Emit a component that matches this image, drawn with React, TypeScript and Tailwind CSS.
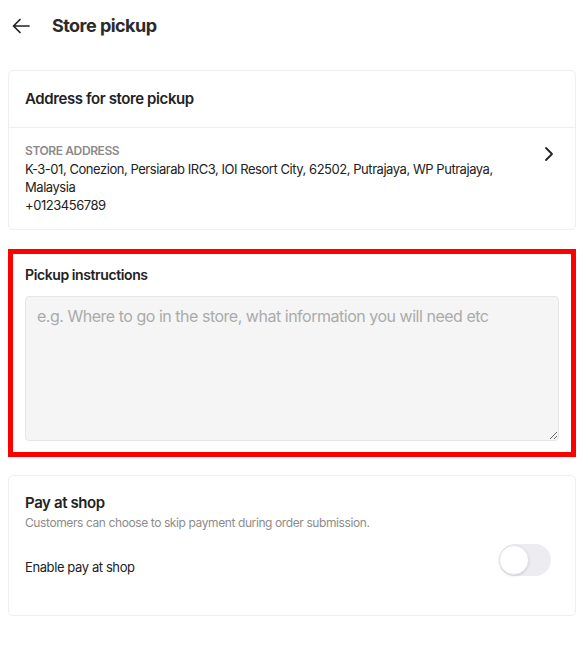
import { ChevronRight } from 'lucide-react'

export default function App() {
  return (
    <div className="min-h-screen bg-white font-['Inter',sans-serif] tracking-[-0.025em] text-[#222]">
      {/* Header */}
      <div className="flex h-[52px] items-center pl-[12px]">
        <svg width="18" height="18" viewBox="0 0 18 18" fill="none" className="shrink-0">
          <path d="M17 9H1.5M8 2.5L1.5 9L8 15.5" stroke="#222" strokeWidth="1.7" strokeLinecap="round" strokeLinejoin="round" />
        </svg>
        <h1 className="ml-[22px] text-[18px] font-bold leading-6 tracking-[-0.03em] text-[#2b2b2b]">Store pickup</h1>
      </div>

      {/* Address card */}
      <div className="ml-2 mr-3 mt-[18px] rounded-[5px] border border-[#efefef]">
        <div className="border-b border-[#efefef] px-4 py-4">
          <h2 className="text-[15px] font-semibold leading-6 text-[#222]">Address for store pickup</h2>
        </div>
        <div className="flex items-start justify-between pb-[15px] pl-4 pr-[14px] pt-[14px]">
          <div>
            <div className="text-[12px] font-semibold uppercase leading-[18px] text-[#8a8a8a]">Store address</div>
            <p className="max-w-[500px] text-[13px] leading-[18px] tracking-[-0.035em] text-[#222]">
              K-3-01, Conezion, Persiarab IRC3, IOI Resort City, 62502, Putrajaya, WP Putrajaya, Malaysia
            </p>
            <p className="text-[13px] leading-[18px] tracking-[-0.035em] text-[#222]">+0123456789</p>
          </div>
          <ChevronRight className="h-6 w-6 shrink-0 text-[#222]" strokeWidth={1.8} />
        </div>
      </div>

      {/* Pickup instructions card */}
      <div className="ml-2 mr-3 mt-[19px] border-[5px] border-[#ff0000] px-3 pb-[11px] pt-[11px]">
        <h2 className="text-[14px] font-semibold leading-5 text-[#222]">Pickup instructions</h2>
        <textarea
          className="mt-[11px] block h-[145px] w-full rounded-[4px] border border-[#e6e6e6] bg-[#f5f5f5] px-[11px] pt-2 text-base leading-[22px] tracking-[-0.03em] text-[#222] outline-none placeholder:text-[#ababab]"
          placeholder="e.g. Where to go in the store, what information you will need etc"
        />
      </div>

      {/* Pay at shop card */}
      <div className="ml-2 mr-3 mt-[18px] rounded-[5px] border border-[#efefef] px-4 pb-[39px] pt-4">
        <h2 className="text-[15px] font-semibold leading-[22px] text-[#222]">Pay at shop</h2>
        <p className="text-[12px] leading-[18px] text-[#8c8c8c]">Customers can choose to skip payment during order submission.</p>
        <div className="mt-3 flex items-end justify-between">
          <span className="text-[13px] leading-[18px] text-[#222]">Enable pay at shop</span>
          <button className="mr-[8px] flex h-8 w-[52px] items-center rounded-full bg-[#ececf1] p-0">
            <span className="h-[30px] w-[30px] rounded-full border border-[#e4e4ea] bg-white shadow-sm" />
          </button>
        </div>
      </div>
    </div>
  )
}
